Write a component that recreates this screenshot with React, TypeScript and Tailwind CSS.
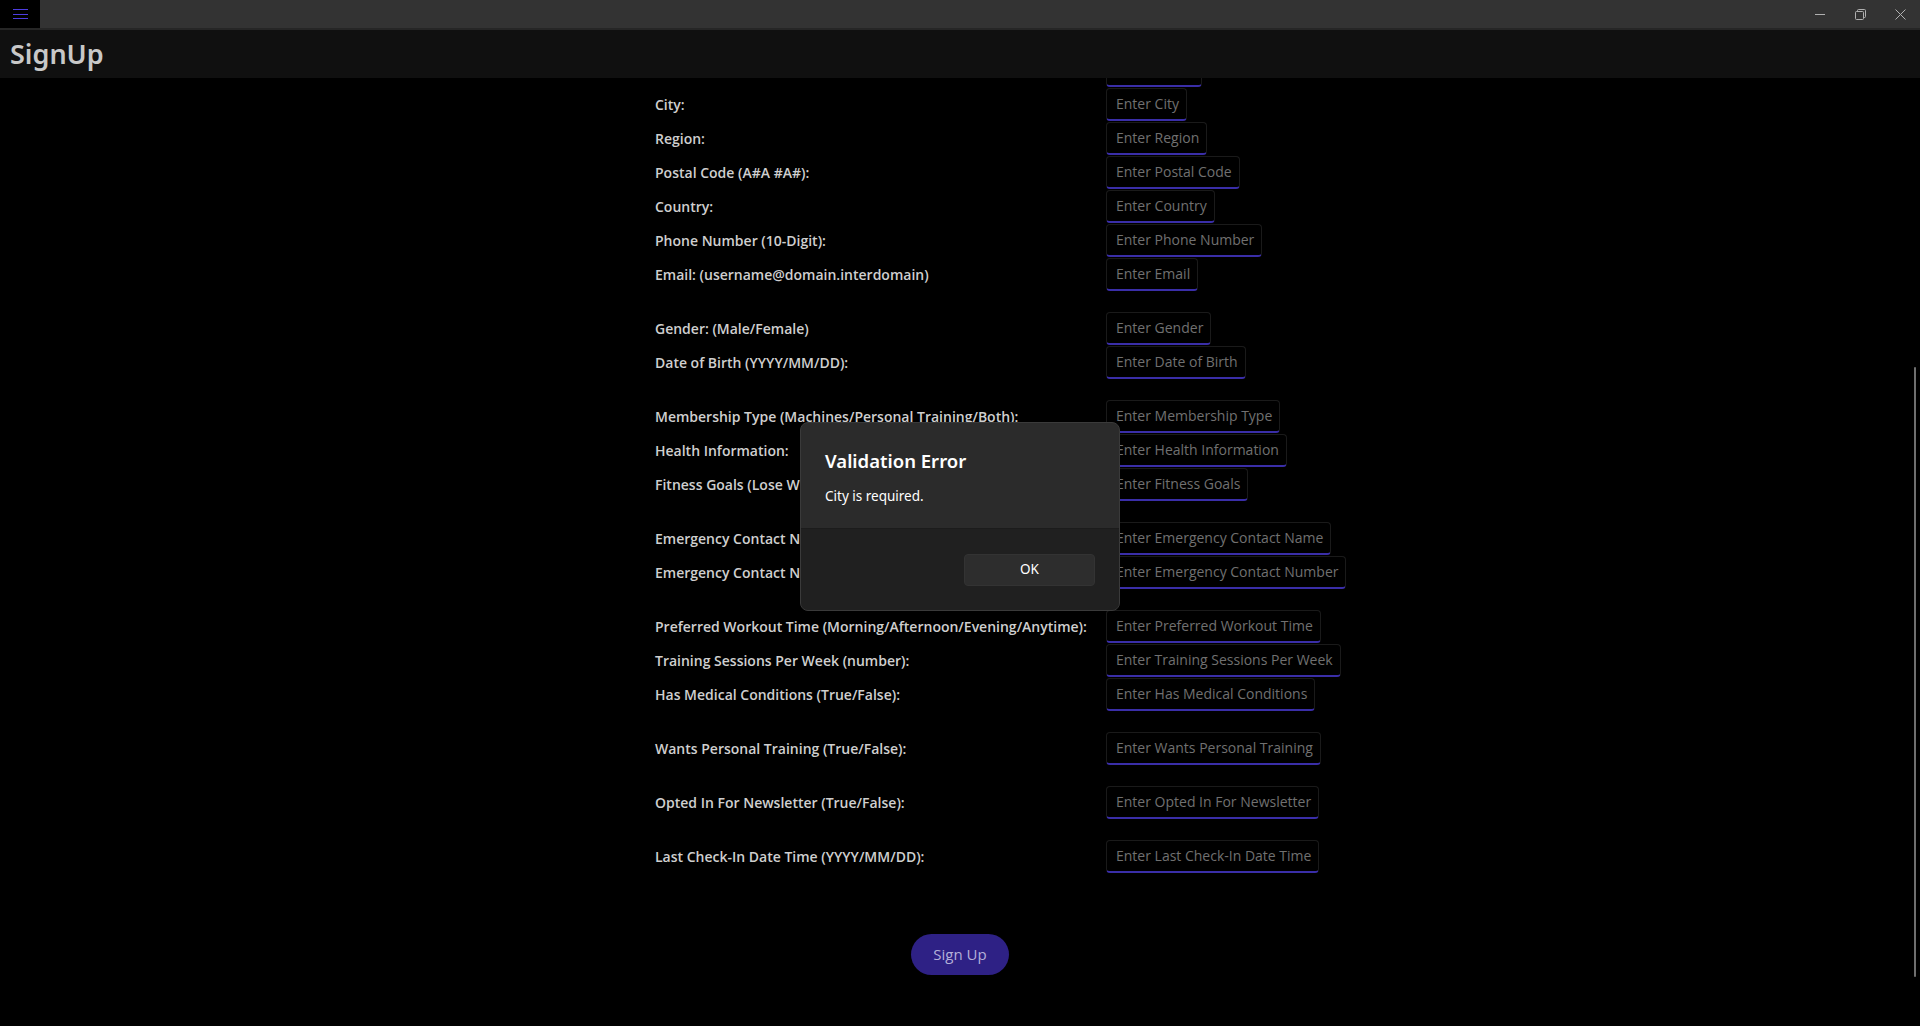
import React from "react";

type Row = { label: string; ph: string };
const groups: Row[][] = [
  [
    { label: "Street:", ph: "Enter Street" },
    { label: "City:", ph: "Enter City" },
    { label: "Region:", ph: "Enter Region" },
    { label: "Postal Code (A#A #A#):", ph: "Enter Postal Code" },
    { label: "Country:", ph: "Enter Country" },
    { label: "Phone Number (10-Digit):", ph: "Enter Phone Number" },
    { label: "Email: (username@domain.interdomain)", ph: "Enter Email" },
  ],
  [
    { label: "Gender: (Male/Female)", ph: "Enter Gender" },
    { label: "Date of Birth (YYYY/MM/DD):", ph: "Enter Date of Birth" },
  ],
  [
    { label: "Membership Type (Machines/Personal Training/Both):", ph: "Enter Membership Type" },
    { label: "Health Information:", ph: "Enter Health Information" },
    { label: "Fitness Goals (Lose Weight/Gain Muscle/Maintain):", ph: "Enter Fitness Goals" },
  ],
  [
    { label: "Emergency Contact Name:", ph: "Enter Emergency Contact Name" },
    { label: "Emergency Contact Number:", ph: "Enter Emergency Contact Number" },
  ],
  [
    { label: "Preferred Workout Time (Morning/Afternoon/Evening/Anytime):", ph: "Enter Preferred Workout Time" },
    { label: "Training Sessions Per Week (number):", ph: "Enter Training Sessions Per Week" },
    { label: "Has Medical Conditions (True/False):", ph: "Enter Has Medical Conditions" },
  ],
  [{ label: "Wants Personal Training (True/False):", ph: "Enter Wants Personal Training" }],
  [{ label: "Opted In For Newsletter (True/False):", ph: "Enter Opted In For Newsletter" }],
  [{ label: "Last Check-In Date Time (YYYY/MM/DD):", ph: "Enter Last Check-In Date Time" }],
];

const openSans = { fontFamily: '"Open Sans", "Noto Sans", sans-serif' };
const segoe = { fontFamily: '"Noto Sans", "Open Sans", sans-serif' };

function FormRow({ row }: { row: Row }) {
  return (
    <div className="grid grid-cols-[451px_auto] items-center h-[34px]">
      <div className="text-[14px] font-semibold text-[#cfcfcf] whitespace-nowrap" style={openSans}>
        {row.label}
      </div>
      <div className="flex">
        <div
          className="h-[33px] flex items-center pl-[9px] pr-[7px] rounded-[4px] border border-[#1a1a1a] border-b-2 border-b-[#3a2ea8] bg-black text-[14px] text-[#707070] whitespace-nowrap"
          style={openSans}
        >
          {row.ph}
        </div>
      </div>
    </div>
  );
}

export default function App() {
  return (
    <div className="w-[1920px] h-[1026px] bg-black overflow-hidden relative flex flex-col">
      {/* Title bar */}
      <div className="h-[28px] bg-[#333333] flex items-stretch shrink-0">
        <div className="w-[40px] bg-black flex flex-col justify-center items-center gap-[3.5px]">
          <div className="w-[15px] h-[1px] bg-[#4d3de0]" />
          <div className="w-[15px] h-[1px] bg-[#4d3de0]" />
          <div className="w-[15px] h-[1px] bg-[#4d3de0]" />
        </div>
        <div className="flex-1" />
        <div className="flex items-center">
          <div className="w-[40px] h-[28px] flex items-center justify-center">
            <svg width="10" height="10" viewBox="0 0 10 10">
              <line x1="0" y1="5.5" x2="10" y2="5.5" stroke="#b0b0b0" strokeWidth="1" />
            </svg>
          </div>
          <div className="w-[40px] h-[28px] flex items-center justify-center">
            <svg width="11" height="11" viewBox="0 0 11 11" fill="none">
              <rect x="0.5" y="2.5" width="8" height="8" rx="1" stroke="#b0b0b0" />
              <path d="M2.5 2.5 V1.5 Q2.5 0.5 3.5 0.5 H9.5 Q10.5 0.5 10.5 1.5 V7.5 Q10.5 8.5 9.5 8.5 H8.5" stroke="#b0b0b0" />
            </svg>
          </div>
          <div className="w-[40px] h-[28px] flex items-center justify-center">
            <svg width="11" height="11" viewBox="0 0 11 11">
              <path d="M0.5 0.5 L10.5 10.5 M10.5 0.5 L0.5 10.5" stroke="#b0b0b0" strokeWidth="1" />
            </svg>
          </div>
        </div>
      </div>
      <div className="h-[2px] bg-[#262626] shrink-0" />
      {/* Header */}
      <div className="h-[48px] bg-[#101010] flex items-start pt-[7px] pl-[10px] shrink-0 relative z-10">
        <span className="text-[27px] font-semibold text-[#c8c8c8] leading-[34px]" style={segoe}>
          SignUp
        </span>
      </div>
      {/* Content */}
      <div className="flex-1 overflow-hidden relative">
        <div className="flex justify-center -mt-[25px]">
          <div className="w-[610px] flex flex-col gap-[20px]">
            {groups.map((g, i) => (
              <div key={i} className="flex flex-col">
                {g.map((r) => (
                  <FormRow key={r.label} row={r} />
                ))}
              </div>
            ))}
          </div>
        </div>
        <div className="flex justify-center mt-[61px]">
          <div
            className="w-[98px] h-[41px] rounded-full bg-[#2e2185] flex items-center justify-center text-[15px] text-[#b4b0d8]"
            style={openSans}
          >
            Sign Up
          </div>
        </div>
        {/* scrollbar */}
        <div className="absolute right-[4px] top-[289px] w-[2px] h-[610px] bg-[#6f6f6f] rounded-full" />
      </div>

      {/* Dialog */}
      <div className="absolute left-[800px] top-[422px] w-[320px] h-[189px] rounded-[8px] border border-[#3a3a3a] bg-[#2b2b2b] overflow-hidden flex flex-col" style={segoe}>
        <div className="flex-1 px-[24px] pt-[24px]">
          <div className="text-[18.5px] font-semibold text-white leading-[28px]">Validation Error</div>
          <div className="text-[13.5px] text-white mt-[11px] leading-[20px]">City is required.</div>
        </div>
        <div className="h-[82px] bg-[#202020] border-t border-[#1c1c1c] flex items-center justify-end px-[24px]">
          <div className="w-[131px] h-[32px] rounded-[4px] bg-[#2d2d2d] border border-[#333333] flex items-center justify-center text-[13.5px] text-white">
            OK
          </div>
        </div>
      </div>
    </div>
  );
}
